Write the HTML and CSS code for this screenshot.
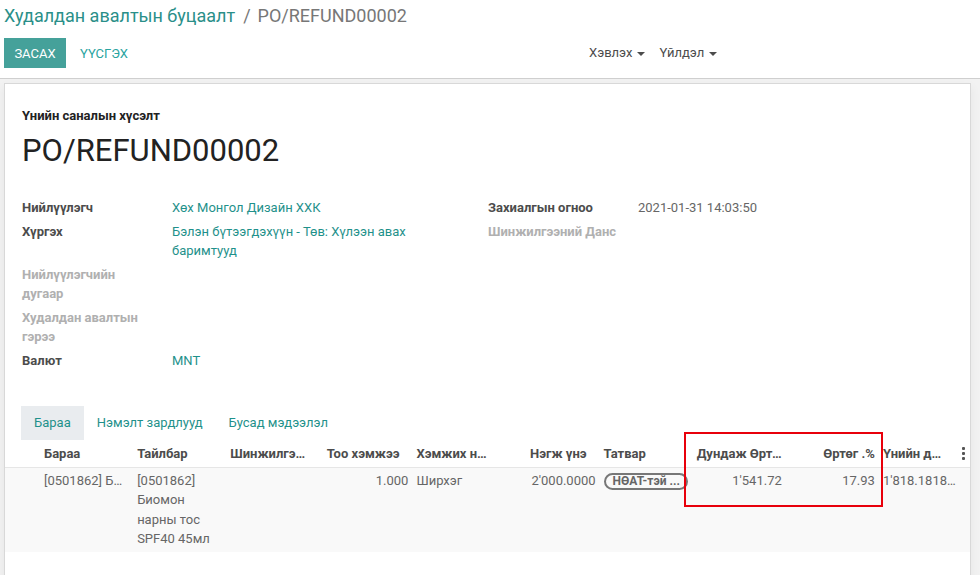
FILE: index.html
```html
<!DOCTYPE html>
<html lang="mn">
<head>
<meta charset="utf-8">
<title>PO/REFUND00002</title>
<link rel="stylesheet" href="styles.css">
</head>
<body>
<div class="cp">
  <div class="breadcrumb">
    <span class="bc-link">Худалдан авалтын буцаалт</span>
    <span class="bc-sep">/</span>
    <span class="bc-active">PO/REFUND00002</span>
  </div>
  <div class="cp-bottom">
    <div class="cp-buttons">
      <button class="btn btn-primary">ЗАСАХ</button>
      <button class="btn btn-link">ҮҮСГЭХ</button>
    </div>
    <div class="cp-sidebar">
      <span class="dd">Хэвлэх <span class="caret"></span></span>
      <span class="dd">Үйлдэл <span class="caret"></span></span>
    </div>
  </div>
</div>
<div class="content">
  <div class="sheet">
    <div class="sheet-head">
      <div class="subtitle">Үнийн саналын хүсэлт</div>
      <h1 class="title">PO/REFUND00002</h1>
    </div>
    <div class="groups">
      <div class="group">
        <div class="label">Нийлүүлэгч</div><div class="value link">Хөх Монгол Дизайн ХХК</div>
        <div class="label">Хүргэх</div><div class="value link">Бэлэн бүтээгдэхүүн - Төв: Хүлээн авах баримтууд</div>
        <div class="label empty">Нийлүүлэгчийн дугаар</div><div class="value"></div>
        <div class="label empty">Худалдан авалтын гэрээ</div><div class="value"></div>
        <div class="label">Валют</div><div class="value link">MNT</div>
      </div>
      <div class="group">
        <div class="label">Захиалгын огноо</div><div class="value plain">2021-01-31 14:03:50</div>
        <div class="label empty">Шинжилгээний Данс</div><div class="value"></div>
      </div>
    </div>
    <div class="tabs">
      <span class="tab active">Бараа</span>
      <span class="tab">Нэмэлт зардлууд</span>
      <span class="tab">Бусад мэдээлэл</span>
    </div>
    <table class="lines">
      <colgroup>
        <col class="c-first"><col class="c"><col class="c"><col class="c"><col class="c-wide"><col class="c"><col class="c"><col class="c"><col class="c"><col class="c-last"><col class="c-opt">
      </colgroup>
      <thead>
        <tr>
          <th class="first">Бараа</th>
          <th>Тайлбар</th>
          <th>Шинжилгээний данс</th>
          <th class="num">Тоо хэмжээ</th>
          <th class="tight-more">Хэмжих нэгж</th>
          <th class="num">Нэгж үнэ</th>
          <th>Татвар</th>
          <th class="loose">Дундаж Өртөг</th>
          <th class="num num-tight">Өртөг .%</th>
          <th class="price">Үнийн дүн</th>
          <th class="opt"><span class="kebab"><i></i><i></i><i></i></span></th>
        </tr>
      </thead>
      <tbody>
        <tr>
          <td class="first trunc">[0501862] Биомон нарны тос SPF40 45мл</td>
          <td class="wrap">[0501862] Биомон нарны тос SPF40 45мл</td>
          <td></td>
          <td class="num">1.000</td>
          <td>Ширхэг</td>
          <td class="num">2'000.0000</td>
          <td><span class="tag">НӨАТ-тэй ...</span></td>
          <td class="num">1'541.72</td>
          <td class="num">17.93</td>
          <td class="trunc last" colspan="2">1'818.1818181818</td>
        </tr>
      </tbody>
    </table>
  </div>
</div>
<div class="highlight"></div>
</body>
</html>
```

FILE: styles.css
```css
* { box-sizing: border-box; }
html, body { margin: 0; padding: 0; }
body {
  width: 980px;
  height: 575px;
  overflow: hidden;
  font-family: Roboto, "Noto Sans", "Liberation Sans", sans-serif;
  font-size: 13px;
  line-height: 1.5;
  color: #4c4c4c;
  background: #f2f2f2;
  position: relative;
}
.cp {
  background: #fff;
  border-bottom: 1px solid #cfcfcf;
  padding: 2px 0 9px 4px;
  height: 79px;
}
.breadcrumb {
  font-size: 18px;
  line-height: 28px;
  display: flex;
}
.bc-link { color: #2a8f89; }
.bc-sep { color: #777; margin: 0 7px 0 8px; }
.bc-active { color: #777; }
.cp-bottom {
  display: flex;
  align-items: center;
  margin-top: 8px;
}
.cp-buttons { display: flex; align-items: center; width: 585px; }
.btn {
  font-family: inherit;
  font-size: 13px;
  border: 0;
  padding: 0;
  height: 30px;
  background: none;
  cursor: pointer;
  text-transform: uppercase;
}
.btn-primary {
  background: #45a19a;
  color: #fff;
  width: 62px;
}
.btn-link { color: #2aa4a0; margin-left: 14px; }
.cp-sidebar { display: flex; gap: 14px; color: #4c4c4c; }
.dd { display: inline-flex; align-items: center; gap: 5px; }
.caret {
  width: 0; height: 0;
  border-left: 4px solid transparent;
  border-right: 4px solid transparent;
  border-top: 4px solid #4c4c4c;
  margin-top: 1px;
}
.content {
  padding: 4px 9px 0 4px;
}
.sheet {
  background: #fff;
  border: 1px solid #d8d8d8;
  box-shadow: 0 4px 10px rgba(0,0,0,0.06);
  height: 520px;
}
.sheet-head { padding: 22px 0 0 17px; }
.subtitle { font-weight: 700; color: #222; line-height: 19px; }
.title {
  margin: 7px 0 0;
  font-size: 31px;
  font-weight: 400;
  line-height: 37px;
  color: #222;
}
.groups {
  display: grid;
  grid-template-columns: 466px 1fr;
  padding: 29px 0 0 17px;
}
.group {
  display: grid;
  grid-template-columns: 150px 1fr;
  align-content: start;
  row-gap: 4px;
}
.label { font-weight: 700; color: #4c4c4c; padding-right: 18px; line-height: 19.5px; }
.label.empty { color: #b0b0b0; }
.value { line-height: 19.5px; padding-right: 50px; }
.value.link { color: #1f918b; }
.value.plain { color: #666; }
.tabs {
  display: flex;
  margin: 36px 0 0 16px;
  height: 34px;
}
.tab {
  color: #1f918b;
  padding: 0 13px;
  line-height: 34px;
}
.tab.active { background: #e9ecef; }
.lines {
  width: 100%;
  border-collapse: collapse;
  table-layout: fixed;
}
.c-first { width: 128px; }
.c { width: 93px; }
.c-wide { width: 94px; }
.c-last { width: 80px; }
.c-opt { width: 11px; }
.lines th {
  text-align: left;
  font-weight: 700;
  color: #4c4c4c;
  padding: 0 12px 0 4px;
  height: 27px;
  white-space: nowrap;
  overflow: hidden;
  text-overflow: ellipsis;
  border-bottom: 1px solid #e6e6e6;
  box-shadow: 0 1px 0 #eee;
}
.lines th.num { text-align: right; padding-right: 13px; padding-left: 4px; }
.lines th.num-tight { padding-right: 4px; }
.lines th.loose { padding-right: 4px; }
.lines th.tight-more { padding-right: 18px; }
.lines th.price { padding-right: 14px; }
.lines th.first, .lines td.first { padding-left: 39px; }
.lines th.first { padding-right: 4px; }
.lines th.opt { padding: 0; overflow: visible; }
.kebab { display: flex; flex-direction: column; gap: 2px; align-items: center; width: 8px; margin-left: 1px; }
.kebab i { display: block; width: 3px; height: 3px; background: #555; border-radius: 1px; }
.lines tbody tr { background: #f9f9f9; }
.lines td {
  vertical-align: top;
  padding: 3px 4px 3px;
  color: #666;
  white-space: nowrap;
  overflow: hidden;
  line-height: 19.5px;
}
.lines td.wrap { white-space: normal; }
.lines td.trunc { text-overflow: ellipsis; }
.lines td.last { padding-right: 14px; }
.lines td.num { text-align: right; }
.tag {
  display: inline-block;
  border: 2px solid #777;
  border-radius: 9px;
  font-size: 12px;
  font-weight: 700;
  color: #666;
  line-height: 13px;
  padding: 0 7px;
  width: 84px;
  margin-top: 2px;
  white-space: nowrap;
}
.highlight {
  position: absolute;
  left: 684px;
  top: 432px;
  width: 199px;
  height: 75px;
  border: 2px solid #e8000b;
  pointer-events: none;
}
```
